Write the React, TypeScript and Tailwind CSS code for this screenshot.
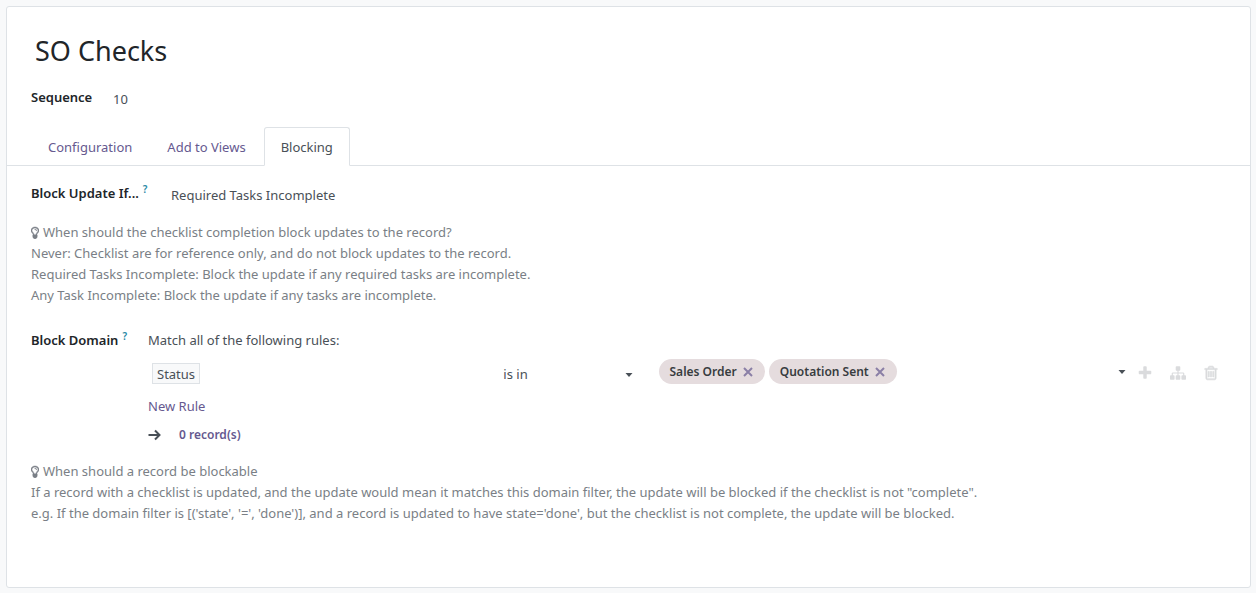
import { useState, type ReactNode } from "react";

const PLUS =
  "M1600 736v192q0 40-28 68t-68 28h-416v416q0 40-28 68t-68 28h-192q-40 0-68-28t-28-68v-416h-416q-40 0-68-28t-28-68v-192q0-40 28-68t68-28h416v-416q0-40 28-68t68-28h192q40 0 68 28t28 68v416h416q40 0 68 28t28 68z";
const SITEMAP =
  "M1792 1248v320q0 40-28 68t-68 28h-320q-40 0-68-28t-28-68v-320q0-40 28-68t68-28h96v-192h-512v192h96q40 0 68 28t28 68v320q0 40-28 68t-68 28h-320q-40 0-68-28t-28-68v-320q0-40 28-68t68-28h96v-192h-512v192h96q40 0 68 28t28 68v320q0 40-28 68t-68 28h-320q-40 0-68-28t-28-68v-320q0-40 28-68t68-28h96v-192q0-52 38-90t90-38h512v-192h-96q-40 0-68-28t-28-68v-320q0-40 28-68t68-28h320q40 0 68 28t28 68v320q0 40-28 68t-68 28h-96v192h512q52 0 90 38t38 90v192h96q40 0 68 28t28 68z";
const TRASH =
  "M704 736v576q0 14-9 23t-23 9h-64q-14 0-23-9t-9-23v-576q0-14 9-23t23-9h64q14 0 23 9t9 23zm256 0v576q0 14-9 23t-23 9h-64q-14 0-23-9t-9-23v-576q0-14 9-23t23-9h64q14 0 23 9t9 23zm256 0v576q0 14-9 23t-23 9h-64q-14 0-23-9t-9-23v-576q0-14 9-23t23-9h64q14 0 23 9t9 23zm128 724v-948h-896v948q0 22 7 40.5t14.5 27 10.5 8.5h832q3 0 10.5-8.5t14.5-27 7-40.5zm-672-1076h448l-48-117q-7-9-17-11h-317q-10 2-17 11zm928 32v64q0 14-9 23t-23 9h-96v948q0 83-47 143.5t-113 60.5h-832q-66 0-113-58.5t-47-141.5v-952h-96q-14 0-23-9t-9-23v-64q0-14 9-23t23-9h309l70-167q15-37 54-63t79-26h320q40 0 79 26t54 63l70 167h309q14 0 23 9t9 23z";
const BULB =
  "M1120 704q0 13-9.5 22.5t-22.5 9.5-22.5-9.5-9.5-22.5q0-46-54-71t-106-25q-13 0-22.5-9.5t-9.5-22.5 9.5-22.5 22.5-9.5q50 0 99.5 16t87 54 37.5 90zm160 0q0-72-34.5-134t-90-101.5-123-62-136.5-22.5-136.5 22.5-123 62-90 101.5-34.5 134q0 101 68 180 10 11 30.5 33t30.5 33q128 153 141 298h228q13-145 141-298 10-11 30.5-33t30.5-33q68-79 68-180zm128 0q0 155-103 268-45 49-74.5 87t-59.5 95.5-34 107.5q47 28 47 82 0 37-25 64 25 27 25 64 0 52-45 81 13 23 13 47 0 46-31.5 71t-77.5 25q-20 44-60 70t-87 26-87-26-60-70q-46 0-77.5-25t-31.5-71q0-24 13-47-45-29-45-81 0-37 25-64-25-27-25-64 0-54 47-82-4-50-34-107.5t-59.5-95.5-74.5-87q-103-113-103-268 0-99 44.5-184.5t117-142 164-89 186.5-32.5 186.5 32.5 164 89 117 142 44.5 184.5z";

function Glyph({ d, viewBox = "0 0 1792 1792", className }: { d: string; viewBox?: string; className: string }) {
  return (
    <svg viewBox={viewBox} className={className} fill="currentColor" aria-hidden="true">
      <path d={d} />
    </svg>
  );
}

function Caret() {
  return (
    <svg viewBox="0 0 8 4" className="h-1 w-2 shrink-0" fill="#495057" aria-hidden="true">
      <path d="M0.5 0h7L4 4z" />
    </svg>
  );
}

function Label({ htmlFor, help, className, children }: { htmlFor?: string; help?: boolean; className: string; children: ReactNode }) {
  return (
    <label htmlFor={htmlFor} className={`shrink-0 font-semibold whitespace-nowrap text-[#212529] ${className}`}>
      {children}
      {help && <sup className="ml-1 text-[10px] font-semibold text-[#2a8aa6]">?</sup>}
    </label>
  );
}

function Hint({ title, lines }: { title: string; lines: string[] }) {
  return (
    <div className="text-[#7a7f86]">
      <p className="flex items-start gap-1">
        <Glyph d={BULB} viewBox="384 128 1024 1664" className="mt-1 h-[13px] w-2 shrink-0 stroke-current stroke-[60]" />
        {title}
      </p>
      {lines.map((line) => (
        <p key={line}>{line}</p>
      ))}
    </div>
  );
}

function Tag({ label, onRemove }: { label: string; onRemove: () => void }) {
  return (
    <span className="flex h-[25px] items-center gap-1.5 rounded-full bg-[#e5dcde] pr-3 pl-[11px] text-xs font-semibold text-[#383c40]">
      {label}
      <button type="button" aria-label={`Remove ${label}`} onClick={onRemove} className="text-[#8a7fa6]">
        <svg viewBox="0 0 10 10" className="size-2.5" fill="none" stroke="currentColor" strokeWidth="2" aria-hidden="true">
          <path d="M1 1l8 8M9 1l-8 8" />
        </svg>
      </button>
    </span>
  );
}

const TABS = ["Configuration", "Add to Views", "Blocking"];

export default function App() {
  const [tab, setTab] = useState("Blocking");
  const [tags, setTags] = useState(["Sales Order", "Quotation Sent"]);

  return (
    <div className="flex min-h-screen bg-[#f8f9fa] p-1.5 pr-[5px] pb-[5px] font-['Noto_Sans','Open_Sans',sans-serif] text-[13px] leading-[21px] text-[#495057]">
      <main className="flex-1 rounded-[3px] border border-[#dee2e6] bg-white pt-6">
        <header className="px-6">
          <input
            aria-label="Checklist name"
            defaultValue="SO Checks"
            className="block h-10 w-full bg-transparent px-1 text-[27px] leading-10 text-[#212529] outline-none"
          />
          <div className="mt-4 flex">
            <Label htmlFor="sequence" className="w-[82px]">Sequence</Label>
            <input id="sequence" defaultValue="10" className="mt-0.5 h-[21px] w-24 bg-transparent outline-none" />
          </div>
        </header>

        <div role="tablist" className="mt-[17px] flex gap-px border-b border-[#dee2e6] px-6">
          {TABS.map((name) => (
            <button
              key={name}
              type="button"
              role="tab"
              aria-selected={tab === name}
              onClick={() => setTab(name)}
              className={`-mb-px h-[39px] rounded-t-[3px] border px-4 pt-0.5 ${
                tab === name ? "border-[#dee2e6] border-b-white bg-white text-[#495057]" : "border-transparent text-[#66598f]"
              }`}
            >
              {name}
            </button>
          ))}
        </div>

        <section role="tabpanel" aria-label={tab} className="px-6 pt-[17px]">
          <div className="mb-4 flex">
            <Label htmlFor="block-update" help className="w-[140px]">Block Update If...</Label>
            <select id="block-update" defaultValue="required" className="mt-0.5 h-[21px] appearance-none bg-transparent outline-none">
              <option value="never">Never</option>
              <option value="required">Required Tasks Incomplete</option>
              <option value="any">Any Task Incomplete</option>
            </select>
          </div>

          <Hint
            title="When should the checklist completion block updates to the record?"
            lines={[
              "Never: Checklist are for reference only, and do not block updates to the record.",
              "Required Tasks Incomplete: Block the update if any required tasks are incomplete.",
              "Any Task Incomplete: Block the update if any tasks are incomplete.",
            ]}
          />

          <div className="mt-6 mb-4 flex">
            <Label htmlFor="operator" help className="w-[117px]">Block Domain</Label>
            <div className="min-w-0 flex-1">
              <p>Match all of the following rules:</p>
              <div className="mt-2 mb-2.5 flex">
                <div className="grid flex-1 grid-cols-[355fr_155fr_471fr]">
                  <div className="pt-1 pl-1">
                    <button type="button" className="block h-[21px] border border-[#dee2e6] bg-[#f8f9fa] px-1 leading-5">Status</button>
                  </div>
                  <div className="relative mr-[26px] flex items-center pt-1">
                    <select id="operator" className="h-[21px] w-full appearance-none bg-transparent outline-none">
                      <option>is in</option>
                      <option>is not in</option>
                    </select>
                    <span className="pointer-events-none absolute right-0">
                      <Caret />
                    </span>
                  </div>
                  <div className="flex items-start justify-between">
                    <div className="flex gap-1">
                      {tags.map((t) => (
                        <Tag key={t} label={t} onRemove={() => setTags(tags.filter((x) => x !== t))} />
                      ))}
                    </div>
                    <button type="button" aria-label="Choose values" className="flex h-[25px] items-center pr-1">
                      <Caret />
                    </button>
                  </div>
                </div>
                <div className="flex h-[27px] items-center gap-[17px] pr-[7px] pl-[7px] text-[#dadbdd]">
                  <button type="button" aria-label="Add rule"><Glyph d={PLUS} className="size-4" /></button>
                  <button type="button" aria-label="Add branch"><Glyph d={SITEMAP} className="size-4" /></button>
                  <button type="button" aria-label="Delete rule"><Glyph d={TRASH} className="size-4 stroke-current stroke-[70]" /></button>
                </div>
              </div>
              <button type="button" className="block text-[#66598f]">New Rule</button>
              <div className="mt-[7px] flex items-center gap-[18px]">
                <svg viewBox="0 0 13 12" className="h-3 w-[13px]" fill="none" stroke="#495057" strokeWidth="2" aria-hidden="true">
                  <path d="M0.5 6h11M7 1.5L11.5 6L7 10.5" />
                </svg>
                <button type="button" className="text-xs leading-[21px] font-semibold text-[#66598f]">0 record(s)</button>
              </div>
            </div>
          </div>

          <Hint
            title="When should a record be blockable"
            lines={[
              'If a record with a checklist is updated, and the update would mean it matches this domain filter, the update will be blocked if the checklist is not "complete".',
              "e.g. If the domain filter is [('state', '=', 'done')], and a record is updated to have state='done', but the checklist is not complete, the update will be blocked.",
            ]}
          />
        </section>
      </main>
    </div>
  );
}
